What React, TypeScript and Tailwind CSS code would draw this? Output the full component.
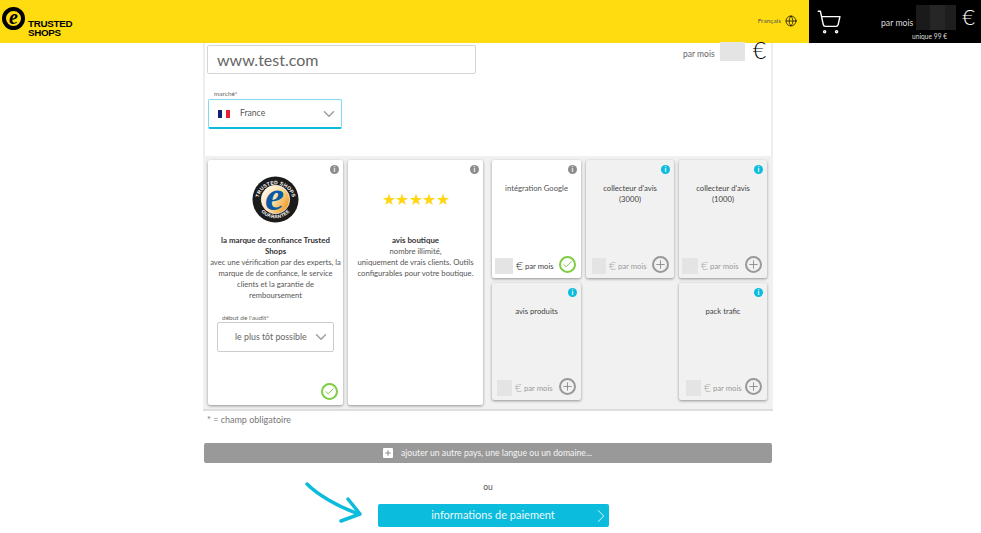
import { ChevronDown, ChevronRight, Globe, ShoppingCart, Check, Plus } from "lucide-react";

const Info = ({ active }: { active?: boolean }) => (
  <span className={`absolute right-[4px] top-[5px] flex h-[9px] w-[9px] items-center justify-center rounded-full text-[7px] font-bold leading-none text-white ${active ? "bg-[#0bbcdc]" : "bg-[#8c8c8c]"}`}>
    i
  </span>
);

const Hidden = ({ w, h, className = "" }: { w: string; h: string; className?: string }) => (
  <span className={`block shrink-0 bg-[#e4e4e4] ${w} ${h} ${className}`} />
);

const Round = ({ check }: { check?: boolean }) =>
  check ? (
    <span className="flex h-[17px] w-[17px] shrink-0 items-center justify-center rounded-full border-2 border-[#7fcc45]">
      <Check size={11} strokeWidth={1.75} className="text-[#5cb81f]" />
    </span>
  ) : (
    <span className="flex h-[17px] w-[17px] shrink-0 items-center justify-center rounded-full border-2 border-[#999]">
      <Plus size={13} strokeWidth={1.5} className="text-[#808080]" />
    </span>
  );

const Small = ({ title, active, boxW = "w-[16px]", pl = "pl-[2px]" }: { title: string[]; active?: boolean; boxW?: string; pl?: string }) => (
  <div className={`relative flex flex-col rounded-[2px] shadow-[0_1px_3px_rgba(0,0,0,0.4)] ${active ? "bg-white" : "bg-[#f1f1f1]"}`}>
    <Info active={!active} />
    <div className={`pt-[23px] text-center text-[7.7px] leading-[11px] ${active ? "text-[#555]" : "text-[#444]"}`}>
      {title.map((t) => (
        <div key={t}>{t}</div>
      ))}
    </div>
    <div className={`mt-auto flex items-center pb-[4px] pr-[5px] ${pl}`}>
      <Hidden w={boxW} h="h-[16px]" />
      <span className={`ml-[3px] text-[12px] font-light leading-none ${active ? "text-[#333]" : "text-[#aaa]"}`}>€</span>
      <span className={`ml-[2px] mt-[2px] flex-1 text-[7.7px] leading-none ${active ? "text-[#444]" : "text-[#999]"}`}>par mois</span>
      <span className="-mt-[3px]">
        <Round check={active} />
      </span>
    </div>
  </div>
);

const Badge = () => (
  <svg width="47" height="47" viewBox="0 0 48 48" className="mx-auto block">
    <defs>
      <linearGradient id="gold" x1="0" y1="0" x2="1" y2="0.6">
        <stop offset="0%" stopColor="#fffdf5" />
        <stop offset="55%" stopColor="#fde3ab" />
        <stop offset="100%" stopColor="#f0a030" />
      </linearGradient>
      <path id="arcTop" d="M6.5 26 A17.5 17.5 0 0 1 41.5 26" />
      <path id="arcBot" d="M5 28 A19.5 19.5 0 0 0 43 28" />
    </defs>
    <circle cx="24" cy="24" r="23.5" fill="#1b1b1b" />
    <circle cx="24" cy="24" r="14.5" fill="url(#gold)" stroke="#fff" strokeWidth="0.7" />
    <text fontSize="5.2" fontWeight="700" fill="#fff" fontFamily="'Liberation Sans', sans-serif" letterSpacing="0.2">
      <textPath href="#arcTop" startOffset="50%" textAnchor="middle">TRUSTED SHOPS</textPath>
    </text>
    <text fontSize="5" fontWeight="700" fill="#fff" fontFamily="'Liberation Sans', sans-serif" letterSpacing="0.2">
      <textPath href="#arcBot" startOffset="50%" textAnchor="middle">GUARANTEE</textPath>
    </text>
    <text x="23" y="35" textAnchor="middle" fontSize="44" fontWeight="700" fontStyle="italic" fill="#0a5aa6" fontFamily="'Liberation Serif', serif">e</text>
  </svg>
);

export default function App() {
  return (
    <div className="relative h-[533px] w-full overflow-hidden bg-white font-['Lato',sans-serif] font-light text-[#444]">
      <header className="flex h-[43px] items-stretch bg-[#ffdc0f]">
        <div className="flex items-start pl-[2px] pt-[7px]">
          <span className="flex h-[23px] w-[23px] items-center justify-center rounded-full border-[4px] border-black bg-[#ffdc0f]">
            <span className="-mt-[3px] font-['Liberation_Serif',serif] text-[20px] font-bold italic leading-none text-black">e</span>
          </span>
          <div className="ml-[3px] mt-[12px] font-['Liberation_Sans',sans-serif] text-[9.8px] font-bold leading-[9px] tracking-[-0.3px] text-black">
            <div>TRUSTED</div>
            <div>SHOPS</div>
          </div>
        </div>
        <div className="ml-auto flex items-center pb-[1px] pr-[12px]">
          <span className="text-[6.5px] font-normal text-[#555]">Français</span>
          <Globe size={12} strokeWidth={1.4} className="ml-[4px] text-black" />
        </div>
        <div className="relative flex w-[172px] items-start bg-black text-white">
          <ShoppingCart size={26} strokeWidth={1.3} className="ml-[7px] mt-[9px]" />
          <div className="ml-[39px] mt-[5px] flex flex-col items-start">
            <div className="flex items-start">
              <span className="mt-[14px] text-[8.7px] font-normal leading-none text-[#ddd]">par mois</span>
              <div className="ml-[3px] flex h-[25px] w-[40px]">
                <span className="h-full w-[14px] bg-[#1a1a1a]" />
                <span className="h-full w-[15px] bg-[#262626]" />
                <span className="h-full w-[11px] bg-[#1e1e1e]" />
              </div>
              <span className="ml-[6px] mt-[1px] text-[22px] font-light leading-none">€</span>
            </div>
            <span className="ml-[31px] mt-[3px] text-[6.7px] font-normal leading-none text-[#ddd]">unique 99 €</span>
          </div>
        </div>
      </header>

      <main className="ml-[203px] w-[570px]">
        <section className="h-[113px] border-x-2 border-[#eeeeee] pl-[2px] pr-[4px] pt-[2px]">
          <div className="flex items-start justify-between">
            <div className="flex h-[29px] w-[269px] items-center rounded-[2px] border border-[#d4d4d4] pl-[9px] text-[16px] font-normal text-[#666]">
              www.test.com
            </div>
            <div className="flex items-center pr-[1px]">
              <span className="mr-[5px] mt-[2px] text-[8.5px] font-normal text-[#666]">par mois</span>
              <Hidden w="w-[25px]" h="h-[19px]" className="-mt-[4px] bg-[#d8d8d8]" />
              <span className="ml-[8px] -mt-[6px] text-[23px] font-light leading-none text-black">€</span>
            </div>
          </div>
          <label className="ml-[7px] mt-[15px] block text-[6.5px] font-normal leading-[9px] text-[#666]">marché*</label>
          <div className="ml-[1px] mt-[1px] flex h-[30px] w-[134px] items-center rounded-[2px] border border-[#7fdcec] border-b-2 border-b-[#0bbcdc] pl-[9px] pr-[3px]">
            <span className="flex h-[8px] w-[13px] overflow-hidden">
              <span className="w-[4px] bg-[#12207a]" />
              <span className="w-[4px] bg-white" />
              <span className="w-[4px] bg-[#e8202e]" />
            </span>
            <span className="ml-[9px] text-[8.6px] font-normal text-[#555]">France</span>
            <ChevronDown size={18} strokeWidth={2} className="ml-auto text-[#a0a0a0]" />
          </div>
        </section>

        <section className="flex h-[255px] gap-[9px] border-b-2 border-[#dedede] bg-[#f1f1f1] pl-[5px] pr-[5px] pt-[4px]">
          <div className="flex gap-[5px]">
            <div className="relative flex h-[245px] w-[135px] flex-col rounded-[2px] bg-white pt-[16px] text-center shadow-[0_1px_3px_rgba(0,0,0,0.4)]">
              <Info />
              <Badge />
              <div className="mt-[12px] text-[7.9px] font-bold leading-[11px] text-[#333]">
                <div>la marque de confiance Trusted</div>
                <div>Shops</div>
              </div>
              <div className="text-[7.6px] font-normal leading-[11px] text-[#555]">
                <div className="whitespace-nowrap">avec une vérification par des experts, la</div>
                <div>marque de de confiance, le service</div>
                <div>clients et la garantie de</div>
                <div>remboursement</div>
              </div>
              <div className="mt-[12px] pl-[14px] text-left text-[6.5px] font-normal leading-[9px] text-[#666]">début de l'audit*</div>
              <div className="mx-[9px] flex h-[30px] items-center justify-between rounded-[2px] border border-[#ccc] pl-[17px] pr-[3px] text-[8.8px] font-normal text-[#666]">
                le plus tôt possible
                <ChevronDown size={18} strokeWidth={2} className="text-[#a0a0a0]" />
              </div>
              <div className="mt-auto flex justify-end pb-[5px] pr-[5px]">
                <Round check />
              </div>
            </div>
            <div className="relative h-[245px] w-[135px] rounded-[2px] bg-white pt-[29px] text-center shadow-[0_1px_3px_rgba(0,0,0,0.4)]">
              <Info />
              <div className="text-[16px] leading-[20px] tracking-[-0.5px] text-[#ffd60f]">★★★★★</div>
              <div className="mt-[26px] text-[7.9px] font-bold leading-[11px] text-[#333]">avis boutique</div>
              <div className="text-[7.7px] font-normal leading-[11px] text-[#555]">
                <div>nombre illimité,</div>
                <div>uniquement de vrais clients. Outils</div>
                <div>configurables pour votre boutique.</div>
              </div>
            </div>
          </div>
          <div className="grid h-[240px] grid-cols-[89px_88px_88px] grid-rows-[118px_117px] gap-x-[5px] gap-y-[5px] font-normal">
            <Small title={["intégration Google"]} active pl="pl-[3px]" boxW="w-[18px]" />
            <Small title={["collecteur d'avis", "(3000)"]} pl="pl-[6px]" boxW="w-[14px]" />
            <Small title={["collecteur d'avis", "(1000)"]} pl="pl-[3px]" boxW="w-[16px]" />
            <Small title={["avis produits"]} pl="pl-[5px]" boxW="w-[15px]" />
            <div />
            <Small title={["pack trafic"]} pl="pl-[7px]" boxW="w-[15px]" />
          </div>
        </section>

        <p className="pl-[4px] pt-[3px] text-[9px] font-normal leading-[12px] text-[#777]">* = champ obligatoire</p>

        <div className="ml-[1px] mt-[17px] flex h-[20px] w-[568px] items-center justify-center rounded-[2px] bg-[#999] pr-[1px] text-[8.7px] font-normal text-[#f4f4f4]">
          <span className="mr-[8px] flex h-[10px] w-[10px] items-center justify-center rounded-[1px] bg-white">
            <Plus size={8} strokeWidth={3} className="text-[#888]" />
          </span>
          ajouter un autre pays, une langue ou un domaine...
        </div>

        <div className="pt-[19px] text-center text-[8.5px] font-normal leading-[10px] text-[#555]">ou</div>

        <button className="relative ml-[175px] mt-[12px] flex h-[23px] w-[231px] items-center justify-center rounded-[2px] bg-[#0bbcdc] pr-[1px] text-[11px] font-normal text-[#e8f9fc]">
          informations de paiement
          <ChevronRight size={22} strokeWidth={0.9} className="absolute right-[-3px] text-white" />
        </button>
      </main>

      <svg className="absolute left-[300px] top-[478px]" width="66" height="48" viewBox="0 0 66 48" fill="none">
        <path d="M7 6 C17 16 36 28 59 36" stroke="#0bbcdc" strokeWidth="3.5" strokeLinecap="round" />
        <path d="M48 21 L60 36 L41 43" stroke="#0bbcdc" strokeWidth="3.5" strokeLinecap="round" strokeLinejoin="round" />
      </svg>
    </div>
  );
}
